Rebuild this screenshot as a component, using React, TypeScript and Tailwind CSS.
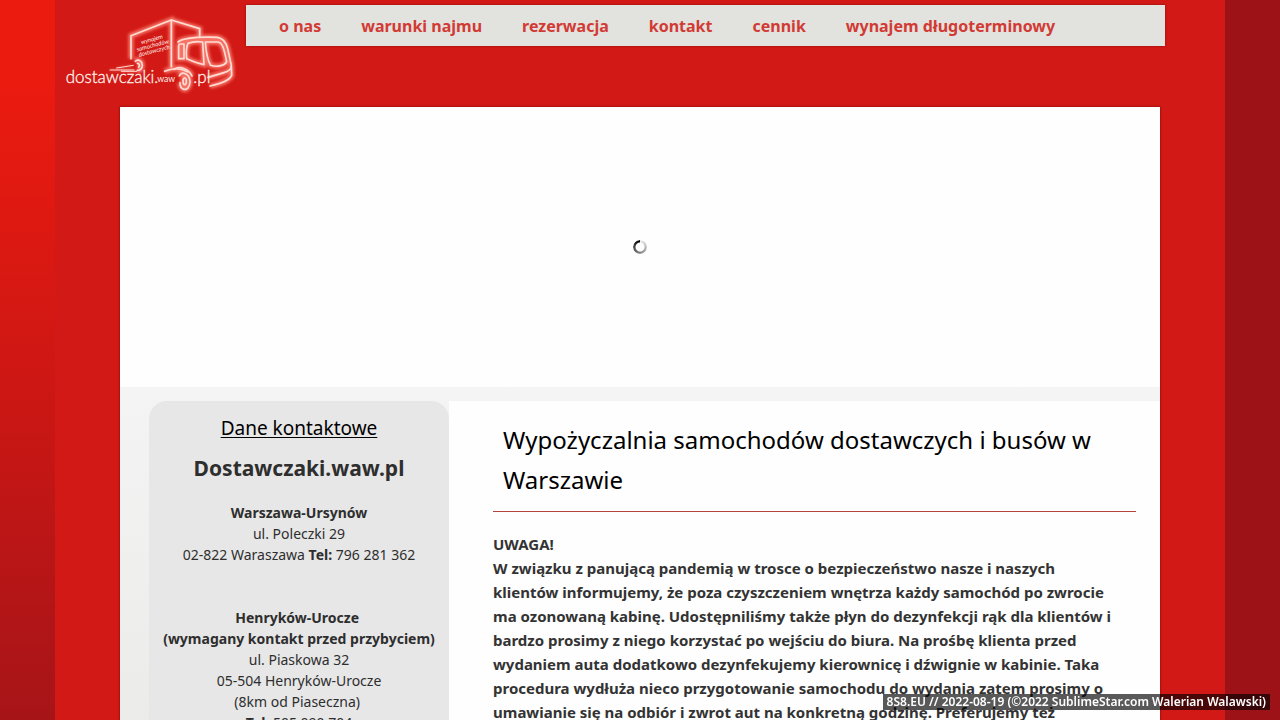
import { Fragment } from 'react';

const menu = [
    { label: 'o nas', href: '#o-nas' },
    { label: 'warunki najmu', href: '#warunki' },
    { label: 'rezerwacja', href: '#rezerwacja' },
    { label: 'kontakt', href: '#kontakt' },
    { label: 'cennik', href: '#cennik' },
    { label: 'wynajem długoterminowy', href: '#wynajem' },
];

function TruckLines() {
    return (
        <>
            {/* cargo box */}
            <path d="M243 176V107L364 60V200" />
            <path d="M364 60L449 86V112" />
            {/* cab */}
            <path d="M384 126C400 114 440 110 502 112C518 114 528 126 533 146L544 196C545 208 536 214 522 218L474 232" />
            <path d="M388 132H402V176H386V138Z" />
            <path d="M414 130C430 124 446 124 458 126L462 194C444 190 424 182 410 176C408 160 408 144 414 130Z" />
            <path d="M466 126H504C516 128 522 142 530 186C522 198 500 202 482 196C472 180 468 154 466 126Z" />
            <path d="M544 200L545 226C540 240 510 252 480 258" />
            {/* wheels */}
            <path d="M256 184C264 176 276 182 277 196C277 206 270 212 262 211M262 190C268 190 270 196 266 202" />
            <path d="M344 214C366 204 392 204 414 216" />
            <path d="M372 208C390 196 418 208 426 228" />
            <path d="M388 228C396 212 418 220 420 244C420 262 410 270 402 268C394 266 390 256 390 248" />
            <ellipse cx="404" cy="244" rx="5" ry="10" />
            {/* speed trails */}
            <path d="M180 210H252M200 204L250 196M214 214H260" strokeWidth="3" />
        </>
    );
}

function Logo() {
    return (
        <svg viewBox="30 30 540 270" className="h-[90px] w-[180px]" role="img" aria-label="dostawczaki.waw.pl">
            <defs>
                <filter id="glow" x="-20%" y="-20%" width="140%" height="140%">
                    <feGaussianBlur stdDeviation="5" />
                </filter>
            </defs>
            <g fill="none" stroke="#ff8a7a" strokeWidth="16" opacity="0.8" filter="url(#glow)">
                <TruckLines />
            </g>
            <g fill="none" stroke="#ffdcd4" strokeWidth="5" strokeLinejoin="round" strokeLinecap="round">
                <TruckLines />
            </g>
            <g fill="#fff0ea" fontFamily="Lato, sans-serif">
                <g transform="translate(308 136) rotate(-15)" fontSize="18" fontStyle="italic" textAnchor="middle">
                    <text x="2" y="-12">wynajem</text>
                    <text y="6">samochodów</text>
                    <text y="23">dostawczych</text>
                </g>
                <g fontSize="51" fontWeight="300" stroke="#fff0ea" strokeWidth="1">
                    <text x="47" y="249">dostawczaki.</text>
                    <text x="430" y="249">.pl</text>
                </g>
                <text x="322" y="245" fontSize="26">waw</text>
            </g>
        </svg>
    );
}

function Header() {
    return (
        <header className="flex h-[107px] items-start pr-[60px] pl-[5px]">
            <a href="#start" className="mt-2.5 shrink-0">
                <Logo />
            </a>
            <nav className="mt-[5px] ml-1.5 flex h-[41px] flex-1 items-center gap-10 bg-[#e2e2df] px-[33px] shadow-[0_0_2px_rgba(60,0,0,0.5)]">
                {menu.map((item) => (
                    <a key={item.label} href={item.href} className="text-base font-bold whitespace-nowrap text-[#d23a34]">
                        {item.label}
                    </a>
                ))}
            </nav>
        </header>
    );
}

function Slider() {
    return (
        <section className="flex h-[280px] items-center justify-center bg-[#fefefe]" aria-busy="true">
            <div className="size-3.5 rounded-full bg-[conic-gradient(#eeeeee,#888888_50%,#000000)] mask-[radial-gradient(circle,transparent_4px,black_5px)]" />
        </section>
    );
}

type BranchProps = {
    name: string[];
    lines: string[];
};

function Branch({ name, lines }: BranchProps) {
    return (
        <>
            {name.map((part) => (
                <Fragment key={part}>
                    <strong>{part}</strong>
                    <br />
                </Fragment>
            ))}
            {lines.map((line) => (
                <Fragment key={line}>
                    {line}
                    <br />
                </Fragment>
            ))}
        </>
    );
}

function Sidebar() {
    return (
        <aside className="w-[300px] shrink-0 rounded-t-[18px] bg-[#e7e7e7] pt-3 text-center text-sm leading-[21px] text-[#2e2e2e]">
            <h3 className="text-[19px] leading-[30px] text-black underline underline-offset-2">Dane kontaktowe</h3>
            <h2 className="mt-2.5 text-[21px] leading-[30px] font-bold">Dostawczaki.waw.pl</h2>
            <p className="mt-[19px]">
                <Branch name={['Warszawa-Ursynów']} lines={['ul. Poleczki 29']} />
                02-822 Waraszawa <strong>Tel:</strong> 796 281 362
            </p>
            <p className="mt-[42px]">
                <Branch
                    name={['Henryków-Urocze\u00a0', '(wymagany kontakt przed przybyciem)']}
                    lines={['ul. Piaskowa 32', '05-504 Henryków-Urocze', '(8km od Piaseczna)\u00a0']}
                />
                <strong>Tel:</strong> 505 090 704
            </p>
        </aside>
    );
}

function Article() {
    return (
        <main className="flex-1 bg-[#fefefe] pt-[19px] pr-6 pl-11">
            <h1 className="px-2.5 pb-[11px] text-2xl leading-10 text-black">
                Wypożyczalnia samochodów dostawczych i busów w Warszawie
            </h1>
            <div className="h-px bg-[#b5453c]" />
            <p className="mt-5 pr-4 text-[15px] leading-6 font-bold text-[#333333]">
                UWAGA!
                <br />
                W związku z panującą pandemią w trosce o bezpieczeństwo nasze i naszych klientów informujemy,
                że poza czyszczeniem wnętrza każdy samochód po zwrocie ma ozonowaną kabinę. Udostępniliśmy
                także płyn do dezynfekcji rąk dla klientów i bardzo prosimy z niego korzystać po wejściu do
                biura. Na prośbę klienta przed wydaniem auta dodatkowo dezynfekujemy kierownicę i dźwignie w
                kabinie. Taka procedura wydłuża nieco przygotowanie samochodu do wydania zatem prosimy o
                umawianie się na odbiór i zwrot aut na konkretną godzinę. Preferujemy też
            </p>
        </main>
    );
}

export default function App() {
    return (
        <div className="flex min-h-screen bg-[#9c1217] font-['Noto_Sans',sans-serif]">
            <div className="flex-1 bg-linear-to-b from-[#ec1b10] from-10% via-[#cf1713] via-50% to-[#a51418]" />
            <div className="w-full max-w-[1170px] bg-[#d21915]">
                <Header />
                <div className="mx-auto max-w-[1040px] shadow-[0_0_2px_rgba(60,0,0,0.7)]">
                    <Slider />
                    <div className="flex bg-linear-to-b from-[#f4f4f4] to-[#ebebea] pt-3.5 pl-[29px]">
                        <Sidebar />
                        <Article />
                    </div>
                </div>
            </div>
            <div className="flex-1" />
            <footer className="fixed right-2.5 bottom-2.5 bg-black/65 px-1 text-xs leading-4 font-semibold text-white">
                8S8.EU // 2022-08-19 (©2022 SublimeStar.com Walerian Walawski)
            </footer>
        </div>
    );
}
